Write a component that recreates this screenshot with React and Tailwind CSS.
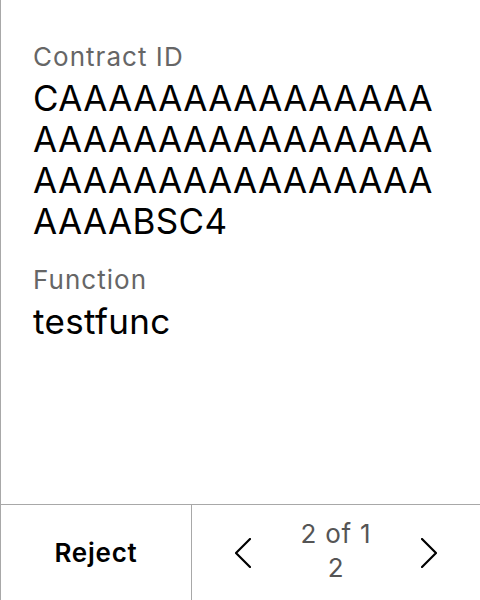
import React from "react";

export default function App() {
  return (
    <div className="w-[480px] h-[600px] bg-white border-l border-[#a8a8a8] flex flex-col text-black" style={{ fontFamily: "Inter, 'Noto Sans', sans-serif" }}>
      <div className="flex-1 pl-[32px] pr-[32px] pt-[41px]">
        <div className="text-[26px] leading-[32px] tracking-[0.04em] text-[#666666]">Contract ID</div>
        <div className="text-[35px] leading-[41px] tracking-[0.01em] break-all mt-[5px]">CAAAAAAAAAAAAAAAAAAAAAAAAAAAAAAAAAAAAAAAAAAAAAAAAAAABSC4</div>
        <div className="text-[26px] leading-[32px] tracking-[0.04em] text-[#666666] mt-[22px]">Function</div>
        <div className="text-[35px] leading-[41px] tracking-[0.01em] mt-[5px]">testfunc</div>
      </div>
      <div className="h-[96px] border-t border-[#a8a8a8] flex">
        <div className="w-[191px] border-r border-[#a8a8a8] flex items-center justify-center text-[26px] font-semibold tracking-[0.03em]">Reject</div>
        <div className="flex-1 flex items-center justify-center gap-[43px]">
          <svg width="16" height="30" viewBox="0 0 16 30" fill="none" stroke="black" strokeWidth="2.2" strokeLinecap="round" strokeLinejoin="round">
            <path d="M15 1 L1 15 L15 29" />
          </svg>
          <div className="w-[84px] text-center break-all text-[26px] leading-[34px] tracking-[0.03em] text-[#555555] -mt-[4px]">2 of 12</div>
          <svg width="16" height="30" viewBox="0 0 16 30" fill="none" stroke="black" strokeWidth="2.2" strokeLinecap="round" strokeLinejoin="round">
            <path d="M1 1 L15 15 L1 29" />
          </svg>
        </div>
      </div>
    </div>
  );
}
